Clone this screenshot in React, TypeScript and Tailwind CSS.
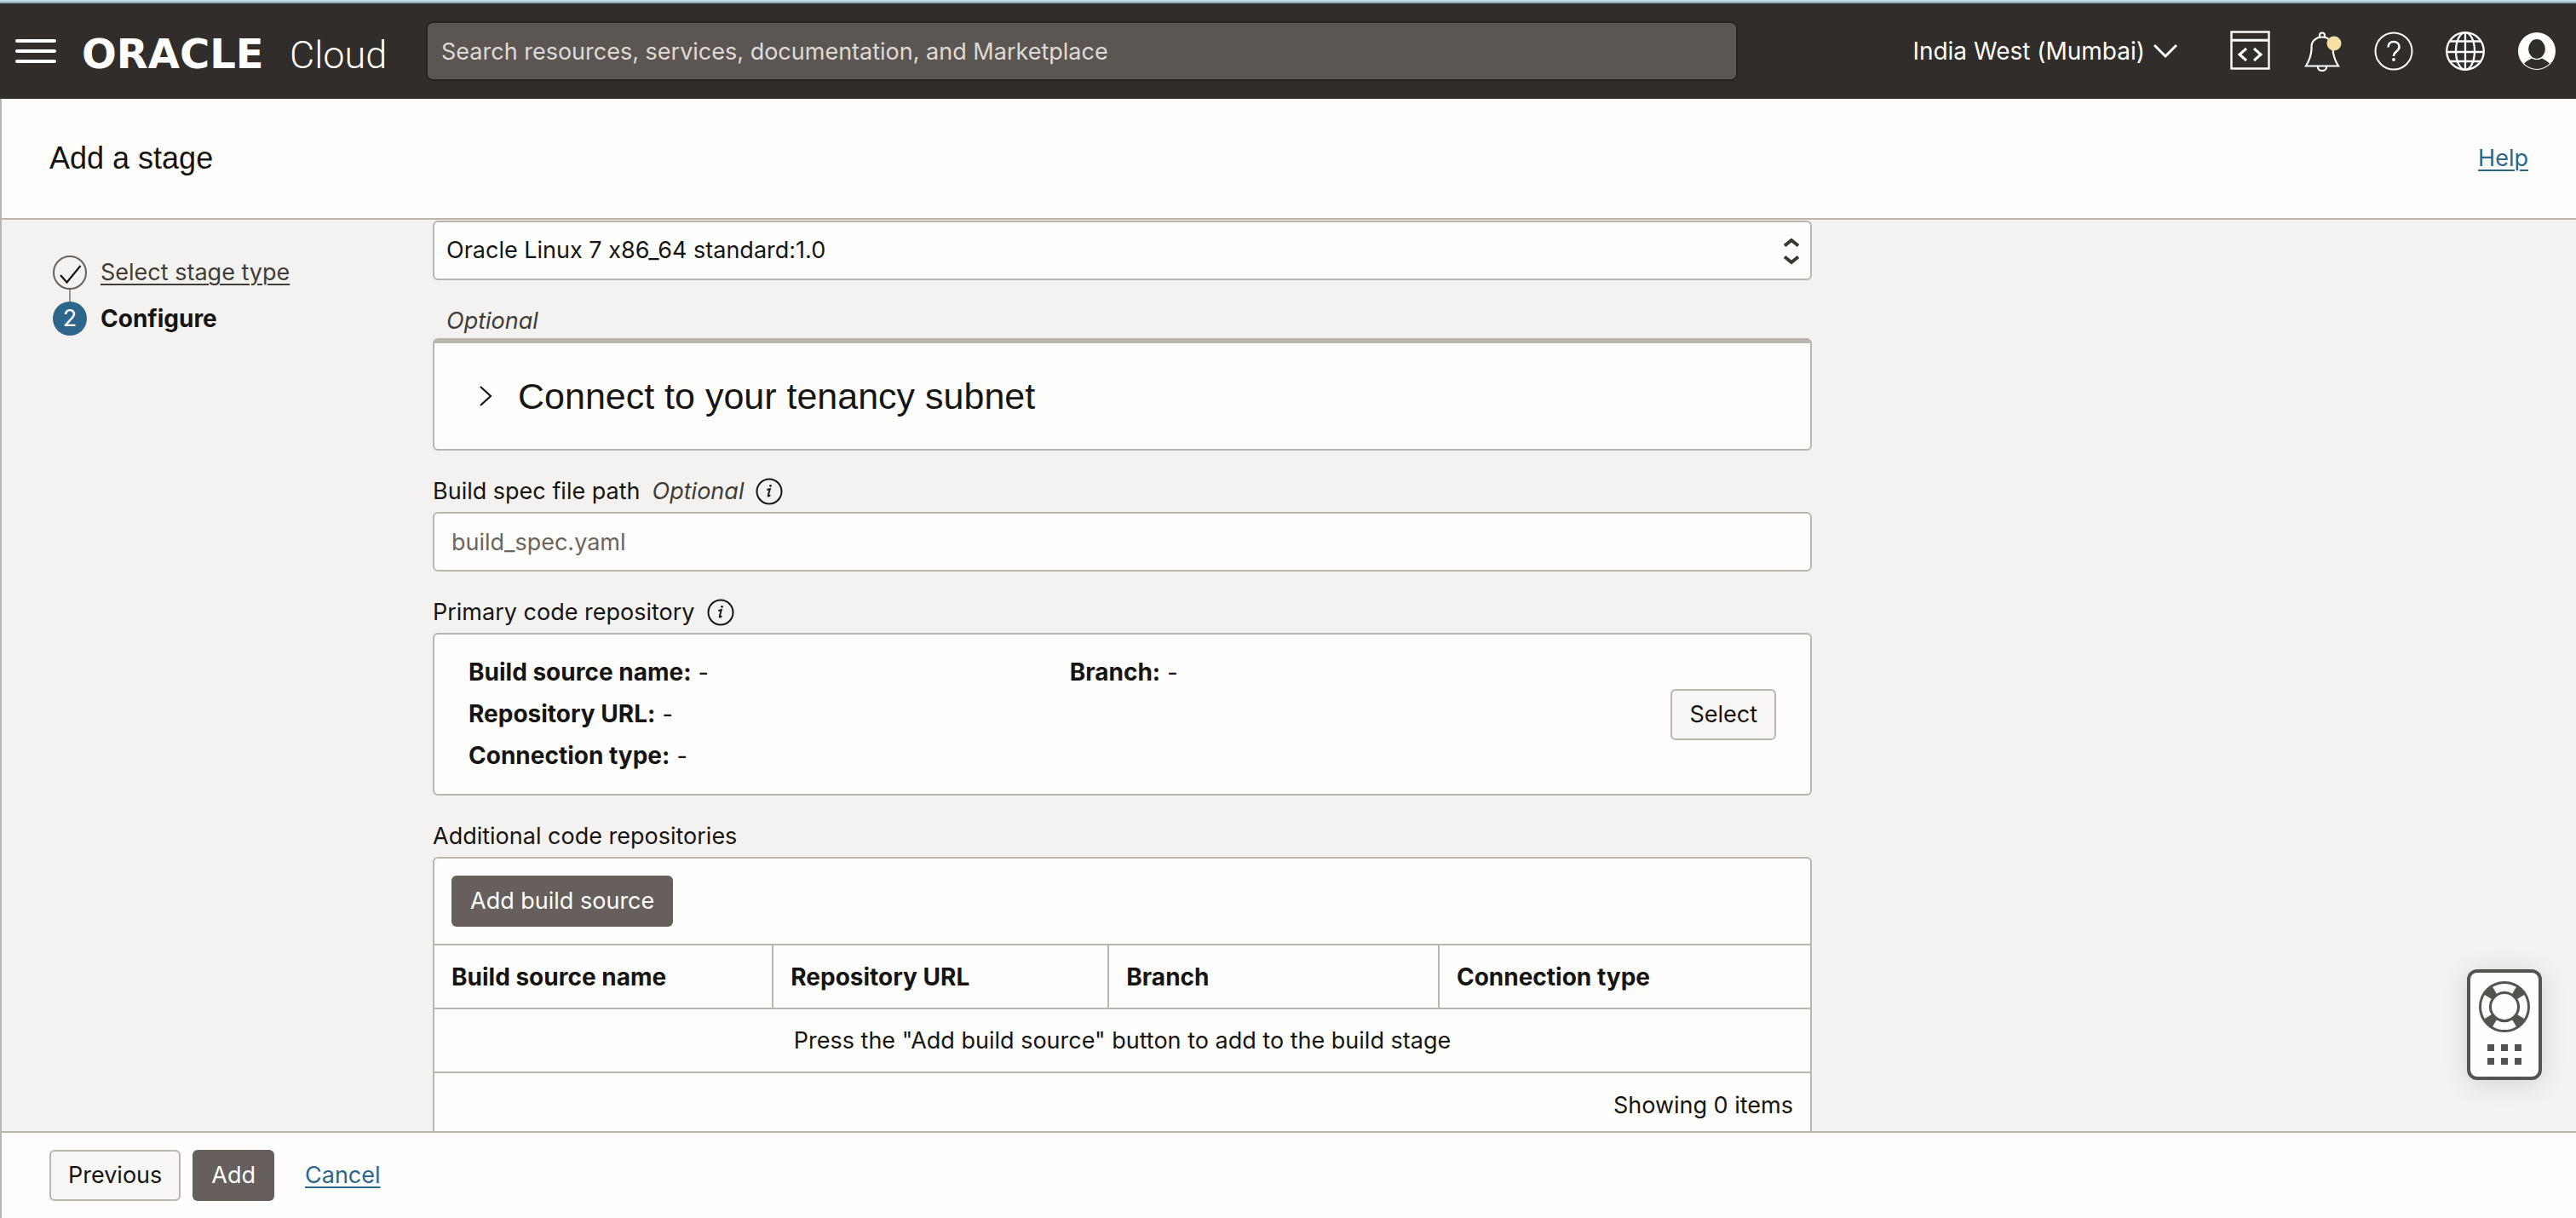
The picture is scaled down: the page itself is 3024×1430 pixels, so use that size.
import { useState, type ReactNode } from "react";

const COLUMNS = [
  { name: "Build source name", width: "w-[24.6%]" },
  { name: "Repository URL", width: "w-[24.4%]" },
  { name: "Branch", width: "w-[24%]" },
  { name: "Connection type", width: "w-[27%]" },
];

function CodeIcon() {
  return (
    <svg className="h-12 w-12" viewBox="0 0 48 48" fill="none" stroke="white" strokeWidth="2.4">
      <path d="M1.500 1.500h44v43h-44z" />
      <path d="M1.500 11.300h44" strokeWidth="3" />
      <path d="M19 21l-8 7 8 7M28 21l8 7-8 7" strokeWidth="3" />
    </svg>
  );
}

function BellIcon() {
  return (
    <svg className="h-12 w-12" viewBox="0 0 48 48" fill="none" stroke="white" strokeWidth="2.2">
      <path d="M21 8.500V5.500a3 3 0 0 1 6 0v3" />
      <path d="M5 41.500C9 35 11 29 11.500 22v-3C11.500 12 17 7.500 24 7.500S36.500 12 36.500 19v3C37 29 39 35 43 41.500z" />
      <path d="M19 42v1a5 4 0 0 0 10 0v-1" />
      <circle cx="38" cy="15" r="8.500" fill="#f5dfa5" stroke="none" />
    </svg>
  );
}

function HelpIcon() {
  return (
    <svg className="h-12 w-12" viewBox="0 0 48 48" fill="none" stroke="white" strokeWidth="2">
      <circle cx="24" cy="24" r="21.500" />
      <path d="M17.500 19.500c0-4 2.800-6.500 6.500-6.500s6.500 2.500 6.500 6c0 5.500-6.500 5-6.500 11" strokeWidth="2.600" />
      <circle cx="24" cy="34" r="1.900" fill="white" stroke="none" />
    </svg>
  );
}

function GlobeIcon() {
  return (
    <svg className="h-12 w-12" viewBox="0 0 48 48" fill="none" stroke="white" strokeWidth="2.300">
      <circle cx="24" cy="24" r="21.800" />
      <ellipse cx="24" cy="24" rx="11" ry="21.800" />
      <path d="M24 2v44M2 25h44M5.500 12.500h37M5.500 36h37" />
    </svg>
  );
}

function UserIcon() {
  return (
    <svg className="h-12 w-12" viewBox="0 0 48 48">
      <circle cx="24" cy="24" r="22" fill="white" />
      <path d="M9 38.500c3-3 6-4.500 10-6.500h10c4 2 7 3.500 10 6.500A20.500 20.500 0 0 1 9 38.500z" fill="#312d2a" />
      <ellipse cx="24" cy="21.500" rx="10.500" ry="12" fill="#312d2a" stroke="white" strokeWidth="1.200" />
    </svg>
  );
}

function InfoIcon() {
  return (
    <svg className="h-8 w-8" viewBox="0 0 32 32" fill="none" stroke="#161513" strokeWidth="2">
      <circle cx="16" cy="16" r="14.500" />
      <path d="M13.300 14l3.500-1-2 7.500c-.4 1.600.8 1.600 2.400-.3" strokeWidth="1.900" />
      <circle cx="17.500" cy="9.300" r="1.400" fill="#161513" stroke="none" />
    </svg>
  );
}

function SupportWidget() {
  return (
    <button
      type="button"
      aria-label="Support"
      className="absolute right-10 bottom-[60px] flex h-[130px] w-[88px] flex-col items-center gap-3.5 rounded-xl border-4 border-[#545350] bg-[#fdfdfc] pt-2.5 shadow-[0_4px_30px_rgba(0,0,0,0.12)]"
    >
      <svg className="h-[60px] w-[60px]" viewBox="0 0 60 60" fill="none">
        <circle cx="30" cy="30" r="22.500" stroke="#545350" strokeWidth="15" />
        <g stroke="#fdfdfc" strokeWidth="9">
          <path d="M18.400 10.700A22.500 22.500 0 0 1 41.600 10.700" />
          <path d="M49.300 18.400A22.500 22.500 0 0 1 49.300 41.600" />
          <path d="M41.600 49.300A22.500 22.500 0 0 1 18.400 49.300" />
          <path d="M10.700 41.600A22.500 22.500 0 0 1 10.700 18.400" />
        </g>
      </svg>
      <span className="grid grid-cols-3 gap-2">
        {[0, 1, 2, 3, 4, 5].map((dot) => (
          <span key={dot} className="h-2 w-2 bg-[#545350]" />
        ))}
      </span>
    </button>
  );
}

function Header() {
  return (
    <header className="flex h-28 shrink-0 items-center bg-[#312d2a] pr-[22px] pl-[18px] text-white">
      <button type="button" aria-label="Navigation menu" className="flex w-12 flex-col gap-2">
        <span className="h-1 rounded-full bg-white" />
        <span className="h-1 rounded-full bg-white" />
        <span className="h-1 rounded-full bg-white" />
      </button>
      <a href="#home" className="ml-[30px] flex w-[404px] shrink-0 items-baseline gap-3 pt-2 leading-[60px]">
        <span className="w-[232px] font-['DejaVu_Sans',sans-serif] text-[48px] font-bold">ORACLE</span>
        <span className="font-['Roboto',sans-serif] text-[45px] font-light">Cloud</span>
      </a>
      <input
        type="search"
        aria-label="Search"
        placeholder="Search resources, services, documentation, and Marketplace"
        className="h-[70px] w-full max-w-[1540px] min-w-0 rounded-lg border-2 border-[#272320] bg-[#5b5651] px-4 placeholder:text-[#dedbd7] placeholder:opacity-100"
      />
      <div className="ml-auto flex items-center gap-9">
        <button type="button" className="mr-[26px] flex items-center gap-2.5 text-[28px] whitespace-nowrap">
          India West (Mumbai)
          <svg className="h-5 w-7" viewBox="0 0 28 20" fill="none" stroke="white" strokeWidth="3">
            <path d="M1 3l13 13L27 3" />
          </svg>
        </button>
        <button type="button" aria-label="Developer tools"><CodeIcon /></button>
        <button type="button" aria-label="Announcements"><BellIcon /></button>
        <button type="button" aria-label="Help menu"><HelpIcon /></button>
        <button type="button" aria-label="Language"><GlobeIcon /></button>
        <button type="button" aria-label="Profile"><UserIcon /></button>
      </div>
    </header>
  );
}

function Steps() {
  return (
    <ol className="flex w-[506px] shrink-0 flex-col pt-[42px] pl-[60px]">
      <li className="flex gap-4">
        <div className="flex flex-col items-center">
          <svg className="h-10 w-10" viewBox="0 0 40 40" fill="none">
            <circle cx="20" cy="20" r="19" stroke="#69615c" strokeWidth="2" />
            <path d="M9 23l7.500 8.500L32.500 12" stroke="#161513" strokeWidth="2.200" />
          </svg>
          <span className="h-3.5 w-0.5 bg-[#97928d]" />
        </div>
        <a href="#stage-type" className="text-[#403c38] underline decoration-2 underline-offset-4">Select stage type</a>
      </li>
      <li className="flex gap-4">
        <span className="flex h-10 w-10 items-center justify-center rounded-full bg-[#2c668a] text-white">2</span>
        <span className="text-[28px] font-bold">Configure</span>
      </li>
    </ol>
  );
}

function Pair({ name }: { name: string }) {
  return (
    <div className="flex gap-2">
      <dt className="text-[28px] font-bold">{name}:</dt>
      <dd>-</dd>
    </div>
  );
}

function Optional() {
  return <em className="text-[#403c38]">Optional</em>;
}

function Field({ label, children }: { label: ReactNode; children: ReactNode }) {
  return (
    <div className="mt-7 flex flex-col gap-1">
      <div className="flex items-center gap-3.5">{label}</div>
      {children}
    </div>
  );
}

function StageForm() {
  const [image, setImage] = useState("ol7");
  const [path, setPath] = useState("");
  return (
    <form className="flex w-full max-w-[1619px] flex-col pt-px">
      <div className="relative">
        <select
          aria-label="Base container image"
          value={image}
          onChange={(e) => setImage(e.target.value)}
          className="h-[70px] w-full appearance-none rounded-md border-2 border-[#bbb5b0] bg-[#fdfdfc] px-3.5"
        >
          <option value="ol7">Oracle Linux 7 x86_64 standard:1.0</option>
        </select>
        <svg className="pointer-events-none absolute top-5 right-3.5 h-8 w-5" viewBox="0 0 20 32" fill="none" stroke="#3a3632" strokeWidth="4">
          <path d="M2 9.500l8-6.500 8 6.500M2 22.500l8 6.500 8-6.500" />
        </svg>
      </div>

      <div className="mt-7 pl-4"><Optional /></div>
      <section className="rounded-md border-2 border-t-[6px] border-[#bbb5b0] bg-[#fdfdfc]">
        <button type="button" aria-expanded="false" className="flex h-[124px] w-full items-center gap-7 px-[52px] text-left">
          <svg className="h-6 w-[18px]" viewBox="0 0 18 24" fill="none" stroke="#161513" strokeWidth="2.200">
            <path d="M2 1l12 11L2 23" />
          </svg>
          <span className="font-['Liberation_Sans',sans-serif] text-[43px] leading-[52px]">Connect to your tenancy subnet</span>
        </button>
      </section>

      <Field
        label={
          <>
            <label htmlFor="spec-path">Build spec file path</label>
            <Optional />
            <InfoIcon />
          </>
        }
      >
        <input
          id="spec-path"
          value={path}
          onChange={(e) => setPath(e.target.value)}
          placeholder="build_spec.yaml"
          className="h-[70px] rounded-md border-2 border-[#bbb5b0] bg-[#fdfdfc] px-5 placeholder:text-[#6b645f] placeholder:opacity-100"
        />
      </Field>

      <Field
        label={
          <>
            <span>Primary code repository</span>
            <InfoIcon />
          </>
        }
      >
        <div className="flex items-center rounded-md border-2 border-[#bbb5b0] bg-[#fdfdfc] px-10 py-5">
          <dl className="grid grow grid-cols-2 leading-[49px]">
            <Pair name="Build source name" />
            <Pair name="Branch" />
            <div className="col-span-2"><Pair name="Repository URL" /></div>
            <div className="col-span-2"><Pair name="Connection type" /></div>
          </dl>
          <button type="button" className="h-[60px] rounded-md border-2 border-[#bbb5b0] bg-[#f7f6f5] px-5">Select</button>
        </div>
      </Field>

      <Field label={<span>Additional code repositories</span>}>
        <div className="rounded-md border-2 border-[#bbb5b0] bg-[#fdfdfc]">
          <div className="px-5 py-5">
            <button type="button" className="h-[60px] rounded-md bg-[#665f5b] px-[22px] text-white">Add build source</button>
          </div>
          <table className="w-full table-fixed border-collapse">
            <thead>
              <tr className="h-[75px] border-y-2 border-[#bbb5b0]">
                {COLUMNS.map((column) => (
                  <th key={column.name} scope="col" className={`${column.width} border-l-2 border-[#bbb5b0] px-5 text-left text-[28px] font-bold first:border-l-0`}>
                    {column.name}
                  </th>
                ))}
              </tr>
            </thead>
            <tbody>
              <tr className="h-[75px] border-b-2 border-[#bbb5b0]">
                <td colSpan={4} className="text-center">Press the "Add build source" button to add to the build stage</td>
              </tr>
            </tbody>
          </table>
          <div className="flex h-[75px] items-center justify-end px-5">Showing 0 items</div>
        </div>
      </Field>
    </form>
  );
}

export default function App() {
  return (
    <div className="flex h-screen flex-col overflow-hidden bg-[#fdfdfc] font-['Inter',sans-serif] text-[27px] leading-10 text-[#161513] [font-feature-settings:'calt'_0]">
      <div className="h-1 shrink-0 border-b-2 border-[#93adb0] bg-[#b9dde1]" />
      <Header />
      <div className="flex min-h-0 grow flex-col border-l-2 border-[#bbb5b0]">
        <div className="flex h-[142px] shrink-0 items-center justify-between border-b-2 border-[#bbb5b0] px-14">
          <h1 className="font-['Liberation_Sans',sans-serif] text-[36px]">Add a stage</h1>
          <a href="#help" className="text-[#2c668a] underline decoration-2 underline-offset-4">Help</a>
        </div>
        <main className="relative flex min-h-0 grow overflow-hidden bg-[#f4f2f1] pr-10">
          <Steps />
          <StageForm />
          <SupportWidget />
        </main>
        <footer className="flex h-[102px] shrink-0 items-center border-t-2 border-[#bbb5b0] pl-14">
          <button type="button" className="h-[60px] rounded-md border-2 border-[#bbb5b0] bg-[#f7f6f5] px-5">Previous</button>
          <button type="button" className="ml-3.5 h-[60px] rounded-md bg-[#665f5b] px-[22px] text-white">Add</button>
          <a href="#cancel" className="ml-9 text-[#2c668a] underline decoration-2 underline-offset-4">Cancel</a>
        </footer>
      </div>
    </div>
  );
}
